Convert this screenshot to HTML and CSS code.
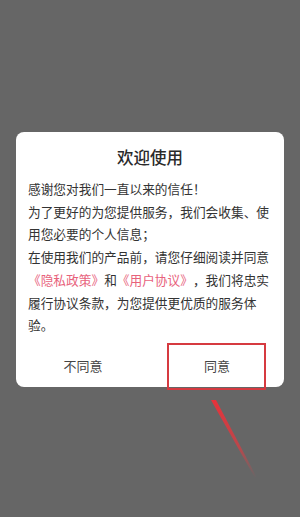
FILE: index.html
```html
<!DOCTYPE html>
<html>
<head>
    <meta charset="utf-8">
    <link rel="stylesheet" href="styles.css">
</head>
<body>
<div class="dialog">
    <div class="title">欢迎使用</div>
    <div class="content">
        <p>感谢您对我们一直以来的信任！</p>
        <p>为了更好的为您提供服务，我们会收集、使用您必要的个人信息；</p>
        <p>在使用我们的产品前，请您仔细阅读并同意<span class="link">《隐私政策》</span>和<span class="link">《用户协议》</span>，我们将忠实履行协议条款，为您提供更优质的服务体验。</p>
    </div>
    <div class="buttons">
        <div class="btn">不同意</div>
        <div class="btn">同意</div>
    </div>
    <div class="mark"></div>
</div>

<svg class="arrow" width="300" height="517" viewBox="0 0 300 517">
    <defs>
        <linearGradient id="fade" x1="213" y1="400" x2="256" y2="478" gradientUnits="userSpaceOnUse">
            <stop offset="0" stop-color="#e8323a" stop-opacity="1"/>
            <stop offset="0.6" stop-color="#e0393f" stop-opacity="0.7"/>
            <stop offset="1" stop-color="#d8454a" stop-opacity="0"/>
        </linearGradient>
    </defs>
    <polygon points="211,400 216,400 257,478 255,478" fill="url(#fade)"/>
</svg>
</body>
</html>
```

FILE: styles.css
```css
* {
    box-sizing: border-box;
}

body {
    margin: 0;
    width: 300px;
    height: 517px;
    background-color: #666666;
    font-family: "Noto Sans CJK SC", "Noto Sans", sans-serif;
    overflow: hidden;
}

.dialog {
    position: relative;
    margin: 132px 16px 0 16px;
    background-color: #fff;
    border-radius: 8px;
}

.title {
    padding-top: 12px;
    height: 38px;
    line-height: 26px;
    font-size: 16.5px;
    font-weight: 500;
    text-align: center;
    color: #2a2a2a;
}

.content {
    padding: 8px 12px 0 12px;
    font-size: 12.7px;
    line-height: 22.7px;
    color: #333;
    text-spacing-trim: space-all;
}

.content p {
    margin: 0;
}

.link {
    color: #e8627c;
}

.buttons {
    display: flex;
    margin-top: 4px;
    height: 46px;
}

.btn {
    flex: 1;
    display: flex;
    align-items: center;
    justify-content: center;
    padding-top: 4px;
    font-size: 13px;
    color: #444;
}

.mark {
    position: absolute;
    left: 151px;
    top: 211px;
    width: 99px;
    height: 47px;
    border: 2px solid #d63a40;
}

.arrow {
    position: absolute;
    left: 0;
    top: 0;
}
```
